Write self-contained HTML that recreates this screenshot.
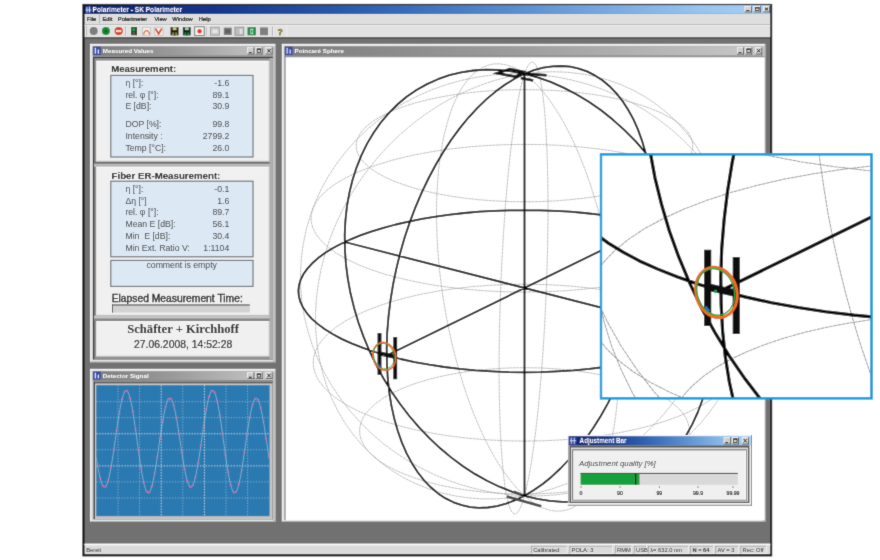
<!DOCTYPE html>
<html><head><meta charset="utf-8"><title>Polarimeter</title>
<style>
html,body{margin:0;padding:0;background:#fff;}
body{width:880px;height:560px;overflow:hidden;}
svg{display:block;font-family:"Liberation Sans",sans-serif;}
</style></head><body>
<svg width="880" height="560" viewBox="0 0 880 560">
<filter id="bl" x="0" y="0" width="880" height="560" filterUnits="userSpaceOnUse"><feConvolveMatrix order="3" kernelMatrix="0.02 0.075 0.02 0.075 0.62 0.075 0.02 0.075 0.02" divisor="1" edgeMode="duplicate" preserveAlpha="true"/></filter>
<g filter="url(#bl)"><rect x="-5" y="-5" width="890" height="570" fill="#fff"/>
<defs>
<linearGradient id="gA" x1="0" x2="1" y1="0" y2="0"><stop offset="0" stop-color="#0c2170"/><stop offset="0.2" stop-color="#15378c"/><stop offset="0.45" stop-color="#3468b6"/><stop offset="0.7" stop-color="#6a9cd8"/><stop offset="0.9" stop-color="#98c4f0"/><stop offset="1" stop-color="#a9d0f4"/></linearGradient>
<linearGradient id="gI" x1="0" x2="1" y1="0" y2="0"><stop offset="0" stop-color="#7c7c7c"/><stop offset="0.45" stop-color="#9a9a9a"/><stop offset="1" stop-color="#c8c8c8"/></linearGradient>
<clipPath id="cw"><rect x="285.5" y="57.2" width="478.7" height="462.9"/></clipPath>
<clipPath id="ci"><rect x="601" y="154.3" width="270.5" height="244"/></clipPath>
<clipPath id="cs"><rect x="96.3" y="384.8" width="173.5" height="131.6"/></clipPath>
<g id="sph"><path d="M524.5 495.8 L522.8 501.4 L521.1 506.0 L519.5 509.6 L517.8 512.1 L516.2 513.5 L514.6 513.9 L513.0 513.1 L511.5 511.3 L510.0 508.3 L508.6 504.2 L507.3 499.1 L506.0 492.8 L504.8 485.5 L503.8 477.2 L502.8 467.9 L501.9 457.6 L501.2 446.5 L500.5 434.5 L500.0 421.7 L499.6 408.2 L499.3 394.1 L499.1 379.3 L499.1 364.1 L499.2 348.5 L499.4 332.5 L499.8 316.3 L500.3 299.9 L500.9 283.4 L501.6 267.0 L502.5 250.7 L503.4 234.6 L504.5 218.8 L505.6 203.4 L506.9 188.4 L508.2 174.0 L509.6 160.2 L511.1 147.1 L512.7 134.7 L514.3 123.2 L515.9 112.5 L517.6 102.7 L519.3 94.0 L521.0 86.2 L522.8 79.5 L524.5 73.8 L526.2 69.3 L527.9 65.8 L529.6 63.5 L531.3 62.2 L532.9 62.1 L534.4 63.1 L535.9 65.1 L537.3 68.2 L538.7 72.4 L540.0 77.6 L541.2 83.7 L542.3 90.8 L543.3 98.8 L544.3 107.7 L545.1 117.3 L545.8 127.8 L546.4 138.9 L547.0 150.7 L547.4 163.2 L547.7 176.1 L547.9 189.6 L548.0 203.5 L548.0 217.7 L547.8 232.3 L547.6 247.0 L547.2 262.0 L546.8 277.1 L546.2 292.2 L545.5 307.3 L544.8 322.3 L543.9 337.2 L543.0 351.9 L541.9 366.2 L540.8 380.3 L539.6 393.9 L538.4 407.1 L537.0 419.8 L535.6 431.9 L534.1 443.3 L532.6 454.1 L531.1 464.1 L529.5 473.3 L527.8 481.7 L526.2 489.2Z M524.5 495.8 L509.1 494.7 L493.7 492.6 L478.5 489.5 L463.5 485.5 L448.8 480.6 L434.4 474.7 L420.5 467.9 L407.1 460.2 L394.2 451.7 L381.9 442.4 L370.4 432.4 L359.5 421.6 L349.4 410.2 L340.2 398.2 L331.8 385.7 L324.4 372.6 L317.9 359.2 L312.4 345.3 L307.9 331.2 L304.4 316.8 L302.0 302.3 L300.7 287.6 L300.5 272.9 L301.3 258.3 L303.3 243.8 L306.3 229.4 L310.4 215.4 L315.5 201.6 L321.7 188.2 L328.9 175.3 L337.1 163.0 L346.2 151.2 L356.2 140.0 L367.0 129.6 L378.6 119.9 L391.0 111.0 L404.0 103.0 L417.7 95.9 L431.9 89.7 L446.6 84.5 L461.7 80.3 L477.1 77.1 L492.7 75.0 L508.6 73.9 L524.5 73.8 L540.4 74.9 L556.3 76.9 L572.0 80.1 L587.5 84.2 L602.6 89.4 L617.4 95.5 L631.7 102.6 L645.5 110.6 L658.6 119.5 L671.1 129.2 L682.9 139.7 L693.8 150.9 L703.9 162.7 L713.1 175.2 L721.4 188.2 L728.7 201.7 L734.9 215.5 L740.2 229.7 L744.3 244.2 L747.4 258.8 L749.3 273.6 L750.2 288.4 L750.0 303.2 L748.6 317.8 L746.2 332.3 L742.7 346.6 L738.1 360.5 L732.6 374.0 L726.0 387.1 L718.4 399.7 L709.9 411.7 L700.6 423.1 L690.4 433.8 L679.4 443.8 L667.7 453.0 L655.4 461.5 L642.4 469.0 L628.9 475.7 L614.9 481.5 L600.4 486.3 L585.7 490.2 L570.6 493.0 L555.4 494.9 L540.0 495.9Z M524.5 495.8 L530.8 500.9 L537.1 505.0 L543.3 508.1 L549.5 510.1 L555.6 511.1 L561.6 511.0 L567.5 509.8 L573.1 507.5 L578.6 504.1 L583.8 499.6 L588.7 494.1 L593.4 487.5 L597.7 479.9 L601.7 471.3 L605.4 461.7 L608.6 451.2 L611.4 439.9 L613.9 427.8 L615.8 414.9 L617.3 401.3 L618.4 387.1 L619.0 372.4 L619.1 357.2 L618.7 341.6 L617.8 325.8 L616.5 309.7 L614.7 293.5 L612.5 277.3 L609.8 261.1 L606.6 245.0 L603.1 229.2 L599.2 213.7 L594.8 198.6 L590.2 184.0 L585.2 169.9 L579.9 156.5 L574.4 143.8 L568.6 131.8 L562.7 120.7 L556.5 110.4 L550.3 101.1 L543.9 92.7 L537.4 85.4 L531.0 79.1 L524.5 73.8 L518.1 69.7 L511.7 66.6 L505.4 64.7 L499.3 63.8 L493.3 64.0 L487.4 65.4 L481.9 67.8 L476.5 71.2 L471.4 75.7 L466.6 81.2 L462.1 87.7 L457.9 95.0 L454.0 103.3 L450.5 112.4 L447.4 122.3 L444.6 133.0 L442.3 144.3 L440.3 156.3 L438.7 168.8 L437.6 181.9 L436.8 195.5 L436.5 209.4 L436.6 223.7 L437.1 238.2 L438.0 253.0 L439.3 267.9 L441.0 282.9 L443.2 297.9 L445.6 312.9 L448.5 327.8 L451.7 342.4 L455.3 356.9 L459.2 371.0 L463.4 384.8 L467.9 398.1 L472.6 411.0 L477.7 423.3 L483.0 435.0 L488.4 446.0 L494.1 456.4 L500.0 466.0 L506.0 474.7 L512.1 482.7 L518.3 489.7Z M524.5 495.8 L510.4 497.8 L496.2 498.9 L482.2 498.9 L468.4 497.9 L454.8 495.9 L441.5 492.9 L428.5 488.8 L416.0 483.8 L404.0 477.9 L392.5 471.0 L381.6 463.1 L371.4 454.4 L361.9 444.9 L353.2 434.5 L345.3 423.4 L338.2 411.6 L332.1 399.2 L326.8 386.2 L322.6 372.6 L319.3 358.6 L317.0 344.3 L315.7 329.6 L315.5 314.6 L316.3 299.5 L318.2 284.4 L321.1 269.2 L325.0 254.1 L329.8 239.1 L335.7 224.4 L342.5 209.9 L350.2 195.9 L358.8 182.3 L368.2 169.2 L378.4 156.7 L389.4 144.9 L401.0 133.7 L413.2 123.4 L425.9 113.9 L439.1 105.2 L452.8 97.5 L466.7 90.8 L481.0 85.0 L495.4 80.2 L509.9 76.5 L524.5 73.8 L539.0 72.2 L553.5 71.7 L567.7 72.3 L581.7 73.9 L595.4 76.5 L608.7 80.2 L621.6 84.9 L633.9 90.5 L645.7 97.1 L656.8 104.7 L667.2 113.0 L677.0 122.3 L685.9 132.2 L694.1 143.0 L701.4 154.3 L707.8 166.3 L713.3 178.9 L717.9 191.9 L721.6 205.4 L724.3 219.2 L726.0 233.4 L726.8 247.7 L726.5 262.2 L725.4 276.9 L723.2 291.5 L720.2 306.1 L716.1 320.6 L711.2 334.9 L705.4 349.0 L698.8 362.8 L691.3 376.2 L683.0 389.1 L673.9 401.6 L664.2 413.6 L653.8 425.0 L642.8 435.7 L631.1 445.7 L619.0 455.0 L606.4 463.4 L593.4 471.1 L580.1 477.9 L566.5 483.8 L552.6 488.7 L538.6 492.7Z M524.5 292.1 L543.8 291.8 L563.0 290.9 L581.8 289.4 L600.1 287.3 L617.8 284.7 L634.8 281.5 L650.7 277.8 L665.7 273.7 L679.5 269.1 L692.0 264.1 L703.1 258.7 L712.8 253.1 L721.0 247.2 L727.6 241.0 L732.6 234.8 L736.0 228.4 L737.8 221.9 L737.9 215.5 L736.4 209.1 L733.3 202.8 L728.7 196.6 L722.5 190.6 L714.9 184.8 L705.9 179.3 L695.7 174.1 L684.2 169.2 L671.5 164.7 L657.9 160.5 L643.3 156.8 L627.9 153.6 L611.7 150.8 L595.0 148.5 L577.8 146.7 L560.2 145.4 L542.4 144.6 L524.5 144.4 L506.6 144.6 L488.8 145.4 L471.2 146.7 L454.0 148.5 L437.3 150.8 L421.1 153.6 L405.7 156.8 L391.1 160.5 L377.5 164.7 L364.8 169.2 L353.3 174.1 L343.1 179.3 L334.1 184.8 L326.5 190.6 L320.3 196.6 L315.7 202.8 L312.6 209.1 L311.1 215.5 L311.2 221.9 L313.0 228.4 L316.4 234.8 L321.4 241.0 L328.0 247.2 L336.2 253.1 L345.9 258.7 L357.0 264.1 L369.5 269.1 L383.3 273.7 L398.3 277.8 L414.2 281.5 L431.2 284.7 L448.9 287.3 L467.2 289.4 L486.0 290.9 L505.2 291.8Z M524.5 201.8 L539.6 201.6 L554.6 200.9 L569.3 199.8 L583.7 198.2 L597.6 196.3 L610.8 193.9 L623.4 191.1 L635.2 188.0 L646.0 184.5 L655.9 180.8 L664.7 176.8 L672.4 172.5 L678.9 168.0 L684.2 163.4 L688.3 158.7 L691.1 153.8 L692.6 148.9 L692.8 144.0 L691.7 139.2 L689.4 134.3 L685.8 129.6 L681.1 125.0 L675.1 120.6 L668.1 116.4 L660.1 112.4 L651.0 108.7 L641.1 105.2 L630.3 102.0 L618.8 99.2 L606.6 96.7 L593.8 94.5 L580.5 92.8 L566.9 91.4 L552.9 90.4 L538.8 89.8 L524.5 89.6 L510.2 89.8 L496.1 90.4 L482.1 91.4 L468.5 92.8 L455.2 94.5 L442.4 96.7 L430.2 99.2 L418.7 102.0 L407.9 105.2 L398.0 108.7 L388.9 112.4 L380.9 116.4 L373.9 120.6 L367.9 125.0 L363.2 129.6 L359.6 134.3 L357.3 139.2 L356.2 144.0 L356.4 148.9 L357.9 153.8 L360.7 158.7 L364.8 163.4 L370.1 168.0 L376.6 172.5 L384.3 176.8 L393.1 180.8 L403.0 184.5 L413.8 188.0 L425.6 191.1 L438.2 193.9 L451.4 196.3 L465.3 198.2 L479.7 199.8 L494.4 200.9 L509.4 201.6Z M524.5 441.1 L543.6 440.8 L562.6 439.8 L581.2 438.2 L599.3 436.0 L616.8 433.2 L633.6 429.8 L649.4 425.9 L664.2 421.5 L677.8 416.6 L690.2 411.3 L701.2 405.7 L710.8 399.7 L718.9 393.4 L725.5 386.9 L730.5 380.2 L733.8 373.5 L735.6 366.6 L735.7 359.8 L734.2 353.0 L731.2 346.2 L726.6 339.7 L720.5 333.3 L713.0 327.2 L704.1 321.3 L693.9 315.8 L682.5 310.6 L670.0 305.8 L656.5 301.4 L642.1 297.5 L626.8 294.0 L610.9 291.1 L594.3 288.6 L577.3 286.7 L559.9 285.3 L542.3 284.5 L524.5 284.2 L506.7 284.5 L489.1 285.3 L471.7 286.7 L454.7 288.6 L438.1 291.1 L422.2 294.0 L406.9 297.5 L392.5 301.4 L379.0 305.8 L366.5 310.6 L355.1 315.8 L344.9 321.3 L336.0 327.2 L328.5 333.3 L322.4 339.7 L317.8 346.2 L314.8 353.0 L313.3 359.8 L313.4 366.6 L315.2 373.5 L318.5 380.2 L323.5 386.9 L330.1 393.4 L338.2 399.7 L347.8 405.7 L358.8 411.3 L371.2 416.6 L384.8 421.5 L399.6 425.9 L415.4 429.8 L432.2 433.2 L449.7 436.0 L467.8 438.2 L486.4 439.8 L505.4 440.8Z M524.5 494.1 L539.3 493.8 L554.0 493.0 L568.4 491.8 L582.5 490.0 L596.0 487.8 L609.0 485.1 L621.4 482.0 L632.9 478.5 L643.5 474.6 L653.2 470.4 L661.8 465.9 L669.4 461.1 L675.8 456.1 L681.0 450.9 L685.0 445.5 L687.7 440.1 L689.2 434.6 L689.4 429.0 L688.3 423.6 L686.1 418.1 L682.6 412.8 L677.9 407.7 L672.1 402.7 L665.3 397.9 L657.4 393.4 L648.5 389.2 L638.8 385.3 L628.2 381.7 L616.9 378.5 L604.9 375.7 L592.4 373.3 L579.4 371.3 L566.0 369.7 L552.3 368.6 L538.5 367.9 L524.5 367.7 L510.5 367.9 L496.7 368.6 L483.0 369.7 L469.6 371.3 L456.6 373.3 L444.1 375.7 L432.1 378.5 L420.8 381.7 L410.2 385.3 L400.5 389.2 L391.6 393.4 L383.7 397.9 L376.9 402.7 L371.1 407.7 L366.4 412.8 L362.9 418.1 L360.7 423.6 L359.6 429.0 L359.8 434.6 L361.3 440.1 L364.0 445.5 L368.0 450.9 L373.2 456.1 L379.6 461.1 L387.2 465.9 L395.8 470.4 L405.5 474.6 L416.1 478.5 L427.6 482.0 L440.0 485.1 L453.0 487.8 L466.5 490.0 L480.6 491.8 L495.0 493.0 L509.7 493.8Z" fill="none" stroke="#9a9a9a" stroke-width="0.65" stroke-dasharray="3 0.5"/><path d="M524.5 372.3 L540.9 372.1 L557.2 371.4 L573.4 370.4 L589.2 368.9 L604.7 367.0 L619.8 364.7 L634.4 362.1 L648.4 359.0 L661.7 355.7 L674.2 352.0 L686.0 347.9 L696.9 343.6 L707.0 339.1 L716.0 334.3 L724.1 329.3 L731.1 324.1 L737.1 318.8 L742.0 313.3 L745.8 307.8 L748.5 302.2 L750.1 296.5 L750.6 290.8 L750.0 285.2 L748.3 279.6 L745.5 274.0 L741.6 268.6 L736.8 263.3 L730.9 258.1 L724.1 253.1 L716.4 248.3 L707.8 243.7 L698.3 239.3 L688.1 235.2 L677.1 231.4 L665.5 227.8 L653.2 224.5 L640.3 221.6 L627.0 218.9 L613.2 216.6 L599.0 214.6 L584.5 213.0 L569.7 211.7 L554.8 210.8 L539.7 210.3 L524.5 210.1 L509.3 210.3 L494.2 210.8 L479.3 211.7 L464.5 213.0 L450.0 214.6 L435.8 216.6 L422.0 218.9 L408.7 221.6 L395.8 224.5 L383.5 227.8 L371.9 231.4 L360.9 235.2 L350.7 239.3 L341.2 243.7 L332.6 248.3 L324.9 253.1 L318.1 258.1 L312.2 263.3 L307.4 268.6 L303.5 274.0 L300.7 279.6 L299.0 285.2 L298.4 290.8 L298.9 296.5 L300.5 302.2 L303.2 307.8 L307.0 313.3 L311.9 318.8 L317.9 324.1 L324.9 329.3 L333.0 334.3 L342.0 339.1 L352.1 343.6 L363.0 347.9 L374.8 352.0 L387.3 355.7 L400.6 359.0 L414.6 362.1 L429.2 364.7 L444.3 367.0 L459.8 368.9 L475.6 370.4 L491.8 371.4 L508.1 372.1Z M524.5 495.8 L515.3 500.2 L506.1 503.7 L497.0 506.1 L487.9 507.5 L479.0 507.8 L470.3 507.1 L461.8 505.2 L453.5 502.3 L445.6 498.4 L438.0 493.4 L430.8 487.3 L424.0 480.3 L417.7 472.2 L411.9 463.2 L406.6 453.3 L401.9 442.6 L397.8 431.0 L394.3 418.7 L391.4 405.6 L389.2 391.9 L387.7 377.7 L386.9 363.0 L386.7 347.9 L387.2 332.4 L388.5 316.7 L390.4 300.8 L393.0 284.8 L396.3 268.9 L400.2 253.0 L404.7 237.3 L409.9 221.9 L415.6 206.8 L421.9 192.2 L428.7 178.0 L435.9 164.5 L443.6 151.5 L451.6 139.3 L460.0 127.9 L468.7 117.3 L477.7 107.6 L486.8 98.9 L496.2 91.1 L505.6 84.3 L515.0 78.5 L524.5 73.8 L533.9 70.2 L543.3 67.7 L552.5 66.3 L561.5 66.0 L570.3 66.7 L578.8 68.6 L587.0 71.4 L594.9 75.4 L602.4 80.3 L609.5 86.2 L616.2 93.1 L622.3 100.8 L628.0 109.5 L633.2 118.9 L637.8 129.1 L641.8 140.1 L645.3 151.7 L648.2 163.9 L650.5 176.6 L652.2 189.9 L653.3 203.5 L653.8 217.5 L653.7 231.9 L652.9 246.5 L651.6 261.2 L649.6 276.0 L647.1 290.9 L644.0 305.8 L640.3 320.6 L636.1 335.2 L631.4 349.6 L626.1 363.8 L620.4 377.6 L614.2 390.9 L607.6 403.9 L600.6 416.3 L593.2 428.1 L585.4 439.3 L577.4 449.8 L569.0 459.5 L560.4 468.5 L551.7 476.7 L542.7 484.0 L533.6 490.3Z M524.5 495.8 L511.9 491.7 L499.4 486.7 L487.0 480.8 L474.8 473.9 L463.0 466.2 L451.4 457.6 L440.2 448.3 L429.4 438.2 L419.1 427.4 L409.3 416.0 L400.1 404.0 L391.4 391.4 L383.4 378.3 L376.1 364.9 L369.5 351.0 L363.6 336.9 L358.4 322.5 L354.1 307.9 L350.5 293.3 L347.8 278.6 L345.9 263.9 L344.9 249.3 L344.7 234.8 L345.4 220.6 L346.9 206.7 L349.3 193.1 L352.5 180.0 L356.6 167.3 L361.5 155.1 L367.1 143.6 L373.6 132.7 L380.8 122.5 L388.8 113.1 L397.4 104.5 L406.6 96.8 L416.5 90.0 L427.0 84.1 L437.9 79.2 L449.4 75.2 L461.2 72.3 L473.4 70.5 L485.9 69.7 L498.6 70.0 L511.5 71.4 L524.5 73.8 L537.5 77.4 L550.6 81.9 L563.5 87.6 L576.3 94.2 L588.8 101.8 L601.1 110.3 L613.0 119.8 L624.5 130.1 L635.5 141.2 L645.9 153.1 L655.8 165.7 L665.0 178.8 L673.5 192.6 L681.3 206.8 L688.3 221.4 L694.4 236.4 L699.7 251.6 L704.2 267.0 L707.7 282.5 L710.3 297.9 L712.0 313.3 L712.7 328.6 L712.5 343.6 L711.4 358.3 L709.3 372.6 L706.3 386.5 L702.5 399.8 L697.7 412.5 L692.1 424.6 L685.8 436.0 L678.6 446.6 L670.7 456.4 L662.1 465.3 L652.9 473.3 L643.1 480.4 L632.7 486.5 L621.9 491.6 L610.6 495.8 L599.0 498.8 L587.0 500.9 L574.8 501.9 L562.4 501.9 L549.8 500.9 L537.2 498.8Z M386.7 355.5 L653.8 224.7 M344.7 242.0 L712.7 336.1 M524.5 73.8 L524.5 495.8" fill="none" stroke="#000" stroke-width="1.80" stroke-linejoin="round"/><g stroke="#0d0d0d" stroke-width="2.5" fill="none" stroke-linejoin="miter"><path d="M497.2 73.2 L509.8 69 L523.6 71.9 L515.6 76.8 Z"/><path d="M525.5 73.8 L546.5 75.3 M520.8 78 L533.2 80.5"/></g><g stroke="#484848" stroke-width="2.6" fill="none"><path d="M506.8 496.5 L541.3 506.2 M513.7 491.8 L520.9 494.4"/></g><g stroke="#0a0a0a" fill="none"><path d="M379.5 333 L379.5 374.8 M395.2 336.9 L395.2 379.2" stroke-width="3.9"/><path d="M380 353.5 L394.6 356.8" stroke-width="4.1"/></g><ellipse cx="384.3" cy="356.4" rx="11.2" ry="14.0" transform="rotate(-16 384.3 356.4)" fill="none" stroke="#ee6c1c" stroke-width="1.7" stroke-dasharray="1.5 0.35" stroke-linecap="round"/><ellipse cx="383.9" cy="356.1" rx="10.2" ry="13.0" transform="rotate(-16 383.9 356.1)" fill="none" stroke="#2ea040" stroke-width="0.75"/><circle cx="383.8" cy="355.9" r="0.95" fill="#18a040"/><path d="M378.2 364.2 L380.4 366.8" stroke="#2a6fd0" stroke-width="1.3"/></g><g id="sph2"><path d="M524.5 495.8 L522.8 501.4 L521.1 506.0 L519.5 509.6 L517.8 512.1 L516.2 513.5 L514.6 513.9 L513.0 513.1 L511.5 511.3 L510.0 508.3 L508.6 504.2 L507.3 499.1 L506.0 492.8 L504.8 485.5 L503.8 477.2 L502.8 467.9 L501.9 457.6 L501.2 446.5 L500.5 434.5 L500.0 421.7 L499.6 408.2 L499.3 394.1 L499.1 379.3 L499.1 364.1 L499.2 348.5 L499.4 332.5 L499.8 316.3 L500.3 299.9 L500.9 283.4 L501.6 267.0 L502.5 250.7 L503.4 234.6 L504.5 218.8 L505.6 203.4 L506.9 188.4 L508.2 174.0 L509.6 160.2 L511.1 147.1 L512.7 134.7 L514.3 123.2 L515.9 112.5 L517.6 102.7 L519.3 94.0 L521.0 86.2 L522.8 79.5 L524.5 73.8 L526.2 69.3 L527.9 65.8 L529.6 63.5 L531.3 62.2 L532.9 62.1 L534.4 63.1 L535.9 65.1 L537.3 68.2 L538.7 72.4 L540.0 77.6 L541.2 83.7 L542.3 90.8 L543.3 98.8 L544.3 107.7 L545.1 117.3 L545.8 127.8 L546.4 138.9 L547.0 150.7 L547.4 163.2 L547.7 176.1 L547.9 189.6 L548.0 203.5 L548.0 217.7 L547.8 232.3 L547.6 247.0 L547.2 262.0 L546.8 277.1 L546.2 292.2 L545.5 307.3 L544.8 322.3 L543.9 337.2 L543.0 351.9 L541.9 366.2 L540.8 380.3 L539.6 393.9 L538.4 407.1 L537.0 419.8 L535.6 431.9 L534.1 443.3 L532.6 454.1 L531.1 464.1 L529.5 473.3 L527.8 481.7 L526.2 489.2Z M524.5 495.8 L509.1 494.7 L493.7 492.6 L478.5 489.5 L463.5 485.5 L448.8 480.6 L434.4 474.7 L420.5 467.9 L407.1 460.2 L394.2 451.7 L381.9 442.4 L370.4 432.4 L359.5 421.6 L349.4 410.2 L340.2 398.2 L331.8 385.7 L324.4 372.6 L317.9 359.2 L312.4 345.3 L307.9 331.2 L304.4 316.8 L302.0 302.3 L300.7 287.6 L300.5 272.9 L301.3 258.3 L303.3 243.8 L306.3 229.4 L310.4 215.4 L315.5 201.6 L321.7 188.2 L328.9 175.3 L337.1 163.0 L346.2 151.2 L356.2 140.0 L367.0 129.6 L378.6 119.9 L391.0 111.0 L404.0 103.0 L417.7 95.9 L431.9 89.7 L446.6 84.5 L461.7 80.3 L477.1 77.1 L492.7 75.0 L508.6 73.9 L524.5 73.8 L540.4 74.9 L556.3 76.9 L572.0 80.1 L587.5 84.2 L602.6 89.4 L617.4 95.5 L631.7 102.6 L645.5 110.6 L658.6 119.5 L671.1 129.2 L682.9 139.7 L693.8 150.9 L703.9 162.7 L713.1 175.2 L721.4 188.2 L728.7 201.7 L734.9 215.5 L740.2 229.7 L744.3 244.2 L747.4 258.8 L749.3 273.6 L750.2 288.4 L750.0 303.2 L748.6 317.8 L746.2 332.3 L742.7 346.6 L738.1 360.5 L732.6 374.0 L726.0 387.1 L718.4 399.7 L709.9 411.7 L700.6 423.1 L690.4 433.8 L679.4 443.8 L667.7 453.0 L655.4 461.5 L642.4 469.0 L628.9 475.7 L614.9 481.5 L600.4 486.3 L585.7 490.2 L570.6 493.0 L555.4 494.9 L540.0 495.9Z M524.5 495.8 L530.8 500.9 L537.1 505.0 L543.3 508.1 L549.5 510.1 L555.6 511.1 L561.6 511.0 L567.5 509.8 L573.1 507.5 L578.6 504.1 L583.8 499.6 L588.7 494.1 L593.4 487.5 L597.7 479.9 L601.7 471.3 L605.4 461.7 L608.6 451.2 L611.4 439.9 L613.9 427.8 L615.8 414.9 L617.3 401.3 L618.4 387.1 L619.0 372.4 L619.1 357.2 L618.7 341.6 L617.8 325.8 L616.5 309.7 L614.7 293.5 L612.5 277.3 L609.8 261.1 L606.6 245.0 L603.1 229.2 L599.2 213.7 L594.8 198.6 L590.2 184.0 L585.2 169.9 L579.9 156.5 L574.4 143.8 L568.6 131.8 L562.7 120.7 L556.5 110.4 L550.3 101.1 L543.9 92.7 L537.4 85.4 L531.0 79.1 L524.5 73.8 L518.1 69.7 L511.7 66.6 L505.4 64.7 L499.3 63.8 L493.3 64.0 L487.4 65.4 L481.9 67.8 L476.5 71.2 L471.4 75.7 L466.6 81.2 L462.1 87.7 L457.9 95.0 L454.0 103.3 L450.5 112.4 L447.4 122.3 L444.6 133.0 L442.3 144.3 L440.3 156.3 L438.7 168.8 L437.6 181.9 L436.8 195.5 L436.5 209.4 L436.6 223.7 L437.1 238.2 L438.0 253.0 L439.3 267.9 L441.0 282.9 L443.2 297.9 L445.6 312.9 L448.5 327.8 L451.7 342.4 L455.3 356.9 L459.2 371.0 L463.4 384.8 L467.9 398.1 L472.6 411.0 L477.7 423.3 L483.0 435.0 L488.4 446.0 L494.1 456.4 L500.0 466.0 L506.0 474.7 L512.1 482.7 L518.3 489.7Z M524.5 495.8 L510.4 497.8 L496.2 498.9 L482.2 498.9 L468.4 497.9 L454.8 495.9 L441.5 492.9 L428.5 488.8 L416.0 483.8 L404.0 477.9 L392.5 471.0 L381.6 463.1 L371.4 454.4 L361.9 444.9 L353.2 434.5 L345.3 423.4 L338.2 411.6 L332.1 399.2 L326.8 386.2 L322.6 372.6 L319.3 358.6 L317.0 344.3 L315.7 329.6 L315.5 314.6 L316.3 299.5 L318.2 284.4 L321.1 269.2 L325.0 254.1 L329.8 239.1 L335.7 224.4 L342.5 209.9 L350.2 195.9 L358.8 182.3 L368.2 169.2 L378.4 156.7 L389.4 144.9 L401.0 133.7 L413.2 123.4 L425.9 113.9 L439.1 105.2 L452.8 97.5 L466.7 90.8 L481.0 85.0 L495.4 80.2 L509.9 76.5 L524.5 73.8 L539.0 72.2 L553.5 71.7 L567.7 72.3 L581.7 73.9 L595.4 76.5 L608.7 80.2 L621.6 84.9 L633.9 90.5 L645.7 97.1 L656.8 104.7 L667.2 113.0 L677.0 122.3 L685.9 132.2 L694.1 143.0 L701.4 154.3 L707.8 166.3 L713.3 178.9 L717.9 191.9 L721.6 205.4 L724.3 219.2 L726.0 233.4 L726.8 247.7 L726.5 262.2 L725.4 276.9 L723.2 291.5 L720.2 306.1 L716.1 320.6 L711.2 334.9 L705.4 349.0 L698.8 362.8 L691.3 376.2 L683.0 389.1 L673.9 401.6 L664.2 413.6 L653.8 425.0 L642.8 435.7 L631.1 445.7 L619.0 455.0 L606.4 463.4 L593.4 471.1 L580.1 477.9 L566.5 483.8 L552.6 488.7 L538.6 492.7Z M524.5 292.1 L543.8 291.8 L563.0 290.9 L581.8 289.4 L600.1 287.3 L617.8 284.7 L634.8 281.5 L650.7 277.8 L665.7 273.7 L679.5 269.1 L692.0 264.1 L703.1 258.7 L712.8 253.1 L721.0 247.2 L727.6 241.0 L732.6 234.8 L736.0 228.4 L737.8 221.9 L737.9 215.5 L736.4 209.1 L733.3 202.8 L728.7 196.6 L722.5 190.6 L714.9 184.8 L705.9 179.3 L695.7 174.1 L684.2 169.2 L671.5 164.7 L657.9 160.5 L643.3 156.8 L627.9 153.6 L611.7 150.8 L595.0 148.5 L577.8 146.7 L560.2 145.4 L542.4 144.6 L524.5 144.4 L506.6 144.6 L488.8 145.4 L471.2 146.7 L454.0 148.5 L437.3 150.8 L421.1 153.6 L405.7 156.8 L391.1 160.5 L377.5 164.7 L364.8 169.2 L353.3 174.1 L343.1 179.3 L334.1 184.8 L326.5 190.6 L320.3 196.6 L315.7 202.8 L312.6 209.1 L311.1 215.5 L311.2 221.9 L313.0 228.4 L316.4 234.8 L321.4 241.0 L328.0 247.2 L336.2 253.1 L345.9 258.7 L357.0 264.1 L369.5 269.1 L383.3 273.7 L398.3 277.8 L414.2 281.5 L431.2 284.7 L448.9 287.3 L467.2 289.4 L486.0 290.9 L505.2 291.8Z M524.5 201.8 L539.6 201.6 L554.6 200.9 L569.3 199.8 L583.7 198.2 L597.6 196.3 L610.8 193.9 L623.4 191.1 L635.2 188.0 L646.0 184.5 L655.9 180.8 L664.7 176.8 L672.4 172.5 L678.9 168.0 L684.2 163.4 L688.3 158.7 L691.1 153.8 L692.6 148.9 L692.8 144.0 L691.7 139.2 L689.4 134.3 L685.8 129.6 L681.1 125.0 L675.1 120.6 L668.1 116.4 L660.1 112.4 L651.0 108.7 L641.1 105.2 L630.3 102.0 L618.8 99.2 L606.6 96.7 L593.8 94.5 L580.5 92.8 L566.9 91.4 L552.9 90.4 L538.8 89.8 L524.5 89.6 L510.2 89.8 L496.1 90.4 L482.1 91.4 L468.5 92.8 L455.2 94.5 L442.4 96.7 L430.2 99.2 L418.7 102.0 L407.9 105.2 L398.0 108.7 L388.9 112.4 L380.9 116.4 L373.9 120.6 L367.9 125.0 L363.2 129.6 L359.6 134.3 L357.3 139.2 L356.2 144.0 L356.4 148.9 L357.9 153.8 L360.7 158.7 L364.8 163.4 L370.1 168.0 L376.6 172.5 L384.3 176.8 L393.1 180.8 L403.0 184.5 L413.8 188.0 L425.6 191.1 L438.2 193.9 L451.4 196.3 L465.3 198.2 L479.7 199.8 L494.4 200.9 L509.4 201.6Z M524.5 441.1 L543.6 440.8 L562.6 439.8 L581.2 438.2 L599.3 436.0 L616.8 433.2 L633.6 429.8 L649.4 425.9 L664.2 421.5 L677.8 416.6 L690.2 411.3 L701.2 405.7 L710.8 399.7 L718.9 393.4 L725.5 386.9 L730.5 380.2 L733.8 373.5 L735.6 366.6 L735.7 359.8 L734.2 353.0 L731.2 346.2 L726.6 339.7 L720.5 333.3 L713.0 327.2 L704.1 321.3 L693.9 315.8 L682.5 310.6 L670.0 305.8 L656.5 301.4 L642.1 297.5 L626.8 294.0 L610.9 291.1 L594.3 288.6 L577.3 286.7 L559.9 285.3 L542.3 284.5 L524.5 284.2 L506.7 284.5 L489.1 285.3 L471.7 286.7 L454.7 288.6 L438.1 291.1 L422.2 294.0 L406.9 297.5 L392.5 301.4 L379.0 305.8 L366.5 310.6 L355.1 315.8 L344.9 321.3 L336.0 327.2 L328.5 333.3 L322.4 339.7 L317.8 346.2 L314.8 353.0 L313.3 359.8 L313.4 366.6 L315.2 373.5 L318.5 380.2 L323.5 386.9 L330.1 393.4 L338.2 399.7 L347.8 405.7 L358.8 411.3 L371.2 416.6 L384.8 421.5 L399.6 425.9 L415.4 429.8 L432.2 433.2 L449.7 436.0 L467.8 438.2 L486.4 439.8 L505.4 440.8Z M524.5 494.1 L539.3 493.8 L554.0 493.0 L568.4 491.8 L582.5 490.0 L596.0 487.8 L609.0 485.1 L621.4 482.0 L632.9 478.5 L643.5 474.6 L653.2 470.4 L661.8 465.9 L669.4 461.1 L675.8 456.1 L681.0 450.9 L685.0 445.5 L687.7 440.1 L689.2 434.6 L689.4 429.0 L688.3 423.6 L686.1 418.1 L682.6 412.8 L677.9 407.7 L672.1 402.7 L665.3 397.9 L657.4 393.4 L648.5 389.2 L638.8 385.3 L628.2 381.7 L616.9 378.5 L604.9 375.7 L592.4 373.3 L579.4 371.3 L566.0 369.7 L552.3 368.6 L538.5 367.9 L524.5 367.7 L510.5 367.9 L496.7 368.6 L483.0 369.7 L469.6 371.3 L456.6 373.3 L444.1 375.7 L432.1 378.5 L420.8 381.7 L410.2 385.3 L400.5 389.2 L391.6 393.4 L383.7 397.9 L376.9 402.7 L371.1 407.7 L366.4 412.8 L362.9 418.1 L360.7 423.6 L359.6 429.0 L359.8 434.6 L361.3 440.1 L364.0 445.5 L368.0 450.9 L373.2 456.1 L379.6 461.1 L387.2 465.9 L395.8 470.4 L405.5 474.6 L416.1 478.5 L427.6 482.0 L440.0 485.1 L453.0 487.8 L466.5 490.0 L480.6 491.8 L495.0 493.0 L509.7 493.8Z" fill="none" stroke="#9a9a9a" stroke-width="0.55" stroke-dasharray="2 0.3"/><path d="M524.5 372.3 L540.9 372.1 L557.2 371.4 L573.4 370.4 L589.2 368.9 L604.7 367.0 L619.8 364.7 L634.4 362.1 L648.4 359.0 L661.7 355.7 L674.2 352.0 L686.0 347.9 L696.9 343.6 L707.0 339.1 L716.0 334.3 L724.1 329.3 L731.1 324.1 L737.1 318.8 L742.0 313.3 L745.8 307.8 L748.5 302.2 L750.1 296.5 L750.6 290.8 L750.0 285.2 L748.3 279.6 L745.5 274.0 L741.6 268.6 L736.8 263.3 L730.9 258.1 L724.1 253.1 L716.4 248.3 L707.8 243.7 L698.3 239.3 L688.1 235.2 L677.1 231.4 L665.5 227.8 L653.2 224.5 L640.3 221.6 L627.0 218.9 L613.2 216.6 L599.0 214.6 L584.5 213.0 L569.7 211.7 L554.8 210.8 L539.7 210.3 L524.5 210.1 L509.3 210.3 L494.2 210.8 L479.3 211.7 L464.5 213.0 L450.0 214.6 L435.8 216.6 L422.0 218.9 L408.7 221.6 L395.8 224.5 L383.5 227.8 L371.9 231.4 L360.9 235.2 L350.7 239.3 L341.2 243.7 L332.6 248.3 L324.9 253.1 L318.1 258.1 L312.2 263.3 L307.4 268.6 L303.5 274.0 L300.7 279.6 L299.0 285.2 L298.4 290.8 L298.9 296.5 L300.5 302.2 L303.2 307.8 L307.0 313.3 L311.9 318.8 L317.9 324.1 L324.9 329.3 L333.0 334.3 L342.0 339.1 L352.1 343.6 L363.0 347.9 L374.8 352.0 L387.3 355.7 L400.6 359.0 L414.6 362.1 L429.2 364.7 L444.3 367.0 L459.8 368.9 L475.6 370.4 L491.8 371.4 L508.1 372.1Z M524.5 495.8 L515.3 500.2 L506.1 503.7 L497.0 506.1 L487.9 507.5 L479.0 507.8 L470.3 507.1 L461.8 505.2 L453.5 502.3 L445.6 498.4 L438.0 493.4 L430.8 487.3 L424.0 480.3 L417.7 472.2 L411.9 463.2 L406.6 453.3 L401.9 442.6 L397.8 431.0 L394.3 418.7 L391.4 405.6 L389.2 391.9 L387.7 377.7 L386.9 363.0 L386.7 347.9 L387.2 332.4 L388.5 316.7 L390.4 300.8 L393.0 284.8 L396.3 268.9 L400.2 253.0 L404.7 237.3 L409.9 221.9 L415.6 206.8 L421.9 192.2 L428.7 178.0 L435.9 164.5 L443.6 151.5 L451.6 139.3 L460.0 127.9 L468.7 117.3 L477.7 107.6 L486.8 98.9 L496.2 91.1 L505.6 84.3 L515.0 78.5 L524.5 73.8 L533.9 70.2 L543.3 67.7 L552.5 66.3 L561.5 66.0 L570.3 66.7 L578.8 68.6 L587.0 71.4 L594.9 75.4 L602.4 80.3 L609.5 86.2 L616.2 93.1 L622.3 100.8 L628.0 109.5 L633.2 118.9 L637.8 129.1 L641.8 140.1 L645.3 151.7 L648.2 163.9 L650.5 176.6 L652.2 189.9 L653.3 203.5 L653.8 217.5 L653.7 231.9 L652.9 246.5 L651.6 261.2 L649.6 276.0 L647.1 290.9 L644.0 305.8 L640.3 320.6 L636.1 335.2 L631.4 349.6 L626.1 363.8 L620.4 377.6 L614.2 390.9 L607.6 403.9 L600.6 416.3 L593.2 428.1 L585.4 439.3 L577.4 449.8 L569.0 459.5 L560.4 468.5 L551.7 476.7 L542.7 484.0 L533.6 490.3Z M524.5 495.8 L511.9 491.7 L499.4 486.7 L487.0 480.8 L474.8 473.9 L463.0 466.2 L451.4 457.6 L440.2 448.3 L429.4 438.2 L419.1 427.4 L409.3 416.0 L400.1 404.0 L391.4 391.4 L383.4 378.3 L376.1 364.9 L369.5 351.0 L363.6 336.9 L358.4 322.5 L354.1 307.9 L350.5 293.3 L347.8 278.6 L345.9 263.9 L344.9 249.3 L344.7 234.8 L345.4 220.6 L346.9 206.7 L349.3 193.1 L352.5 180.0 L356.6 167.3 L361.5 155.1 L367.1 143.6 L373.6 132.7 L380.8 122.5 L388.8 113.1 L397.4 104.5 L406.6 96.8 L416.5 90.0 L427.0 84.1 L437.9 79.2 L449.4 75.2 L461.2 72.3 L473.4 70.5 L485.9 69.7 L498.6 70.0 L511.5 71.4 L524.5 73.8 L537.5 77.4 L550.6 81.9 L563.5 87.6 L576.3 94.2 L588.8 101.8 L601.1 110.3 L613.0 119.8 L624.5 130.1 L635.5 141.2 L645.9 153.1 L655.8 165.7 L665.0 178.8 L673.5 192.6 L681.3 206.8 L688.3 221.4 L694.4 236.4 L699.7 251.6 L704.2 267.0 L707.7 282.5 L710.3 297.9 L712.0 313.3 L712.7 328.6 L712.5 343.6 L711.4 358.3 L709.3 372.6 L706.3 386.5 L702.5 399.8 L697.7 412.5 L692.1 424.6 L685.8 436.0 L678.6 446.6 L670.7 456.4 L662.1 465.3 L652.9 473.3 L643.1 480.4 L632.7 486.5 L621.9 491.6 L610.6 495.8 L599.0 498.8 L587.0 500.9 L574.8 501.9 L562.4 501.9 L549.8 500.9 L537.2 498.8Z M386.7 355.5 L653.8 224.7 M344.7 242.0 L712.7 336.1 M524.5 73.8 L524.5 495.8" fill="none" stroke="#000" stroke-width="1.75" stroke-linejoin="round"/><g stroke="#0d0d0d" stroke-width="2.5" fill="none" stroke-linejoin="miter"><path d="M497.2 73.2 L509.8 69 L523.6 71.9 L515.6 76.8 Z"/><path d="M525.5 73.8 L546.5 75.3 M520.8 78 L533.2 80.5"/></g><g stroke="#484848" stroke-width="2.6" fill="none"><path d="M506.8 496.5 L541.3 506.2 M513.7 491.8 L520.9 494.4"/></g><g stroke="#0a0a0a" fill="none"><path d="M379.5 333 L379.5 374.8 M395.2 336.9 L395.2 379.2" stroke-width="3.9"/><path d="M380 353.5 L394.6 356.8" stroke-width="4.1"/></g><ellipse cx="384.3" cy="356.4" rx="11.2" ry="14.0" transform="rotate(-16 384.3 356.4)" fill="none" stroke="#ee6c1c" stroke-width="1.7" stroke-dasharray="1.5 0.35" stroke-linecap="round"/><ellipse cx="383.9" cy="356.1" rx="10.2" ry="13.0" transform="rotate(-16 383.9 356.1)" fill="none" stroke="#2ea040" stroke-width="0.75"/><circle cx="383.8" cy="355.9" r="0.95" fill="#18a040"/><path d="M378.2 364.2 L380.4 366.8" stroke="#2a6fd0" stroke-width="1.3"/></g>
</defs>
<rect x="82.40" y="3.90" width="689.80" height="552.50" fill="#050505"/>
<rect x="84.50" y="5.10" width="685.80" height="8.80" fill="url(#gA)"/>
<rect x="84.50" y="13.90" width="685.80" height="10.70" fill="#dedede"/>
<rect x="84.50" y="24.60" width="685.80" height="12.90" fill="#e2e2e2"/>
<rect x="84.50" y="24.40" width="685.80" height="0.60" fill="#c8c8c8"/>
<rect x="84.50" y="25.00" width="685.80" height="0.60" fill="#f6f6f6"/>
<rect x="84.50" y="37.50" width="685.80" height="506.10" fill="#717171"/>
<rect x="84.50" y="37.50" width="685.80" height="1.20" fill="#505050"/>
<rect x="84.50" y="543.60" width="685.80" height="10.60" fill="#dadada"/>
<rect x="84.50" y="543.60" width="685.80" height="1.80" fill="#f8f8f8"/>
<rect x="85.40" y="6.40" width="6.20" height="6.40" fill="#2a3f9a"/>
<path d="M87 7 V12.6 M89.4 6.6 V12.6 M85.6 10 H91.4" stroke="#dfe6ff" stroke-width="0.9" fill="none"/>
<text x="92.60" y="11.90" font-size="6.60" fill="#fff" font-weight="bold">Polarimeter - SK Polarimeter</text>
<rect x="744.50" y="6.00" width="7.40" height="6.30" fill="#d6d6d6"/>
<rect x="744.50" y="6.00" width="7.40" height="0.70" fill="#f6f6f6"/>
<rect x="744.50" y="6.00" width="0.70" height="6.30" fill="#f6f6f6"/>
<rect x="744.50" y="11.60" width="7.40" height="0.70" fill="#3c3c3c"/>
<rect x="751.20" y="6.00" width="0.70" height="6.30" fill="#3c3c3c"/>
<rect x="746.10" y="10.00" width="3.20" height="1.00" fill="#111"/>
<rect x="753.60" y="6.00" width="7.40" height="6.30" fill="#d6d6d6"/>
<rect x="753.60" y="6.00" width="7.40" height="0.70" fill="#f6f6f6"/>
<rect x="753.60" y="6.00" width="0.70" height="6.30" fill="#f6f6f6"/>
<rect x="753.60" y="11.60" width="7.40" height="0.70" fill="#3c3c3c"/>
<rect x="760.30" y="6.00" width="0.70" height="6.30" fill="#3c3c3c"/>
<rect x="755.30" y="7.70" width="3.80" height="2.70" fill="none" stroke="#111" stroke-width="0.7"/>
<rect x="755.00" y="7.40" width="4.40" height="1.00" fill="#111"/>
<rect x="763.20" y="6.00" width="6.80" height="6.30" fill="#d6d6d6"/>
<rect x="763.20" y="6.00" width="6.80" height="0.70" fill="#f6f6f6"/>
<rect x="763.20" y="6.00" width="0.70" height="6.30" fill="#f6f6f6"/>
<rect x="763.20" y="11.60" width="6.80" height="0.70" fill="#3c3c3c"/>
<rect x="769.30" y="6.00" width="0.70" height="6.30" fill="#3c3c3c"/>
<path d="M765.00 7.80 L768.00 10.30 M768.00 7.80 L765.00 10.30" stroke="#111" stroke-width="1" fill="none"/>
<text x="86.90" y="21.10" font-size="5.75" fill="#000" stroke="#000" stroke-width="0.18">File</text>
<text x="102.50" y="21.10" font-size="5.75" fill="#000" stroke="#000" stroke-width="0.18">Edit</text>
<text x="117.80" y="21.10" font-size="5.75" fill="#000" stroke="#000" stroke-width="0.18">Polarimeter</text>
<text x="154.40" y="21.10" font-size="5.75" fill="#000" stroke="#000" stroke-width="0.18">View</text>
<text x="172.30" y="21.10" font-size="5.75" fill="#000" stroke="#000" stroke-width="0.18">Window</text>
<text x="198.80" y="21.10" font-size="5.75" fill="#000" stroke="#000" stroke-width="0.18">Help</text>
<rect x="99.30" y="14.60" width="0.60" height="8.80" fill="#9a9a9a"/>
<rect x="85.60" y="25.60" width="0.70" height="11.00" fill="#f8f8f8"/>
<rect x="86.30" y="25.60" width="0.60" height="11.00" fill="#a0a0a0"/>
<circle cx="93.7" cy="31.1" r="4" fill="#7d7d7d"/>
<circle cx="105.9" cy="31.1" r="4" fill="#138a36"/><circle cx="105.9" cy="31.1" r="1.5" fill="#0b6a26"/>
<circle cx="118.7" cy="31.1" r="4.1" fill="#d93a20"/>
<rect x="116.00" y="30.00" width="5.40" height="2.20" fill="#f5d6cf"/>
<rect x="125.60" y="26.60" width="0.60" height="9.20" fill="#8c8c8c"/>
<rect x="126.20" y="26.60" width="0.60" height="9.20" fill="#f8f8f8"/>
<rect x="131.00" y="27.00" width="5.80" height="8.20" fill="#14522a"/>
<rect x="132.30" y="28.20" width="2.90" height="2.80" fill="#2a9a4a"/>
<rect x="133.20" y="32.20" width="1.20" height="2.20" fill="#d64a30"/>
<rect x="136.00" y="27.00" width="1.00" height="8.20" fill="#222"/>
<rect x="142.50" y="27.20" width="8.10" height="8.00" fill="#f3ecea"/>
<path d="M143.6 34.6 C144.6 29.2 148.6 29.2 149.6 34.6" stroke="#d96a50" stroke-width="1.2" fill="none"/>
<rect x="142.5" y="27.2" width="8.1" height="8" fill="none" stroke="#b8b0b0" stroke-width="0.6"/>
<rect x="154.50" y="27.20" width="8.50" height="8.00" fill="#f3ecea"/>
<path d="M155.4 28.6 L158.6 33.8 L161.8 28.6" stroke="#d9482c" stroke-width="1.8" fill="none"/>
<rect x="154.5" y="27.2" width="8.5" height="8" fill="none" stroke="#b8b0b0" stroke-width="0.6"/>
<rect x="170.60" y="27.20" width="7.90" height="8.10" fill="#15150c"/>
<rect x="172.60" y="27.20" width="4.00" height="3.00" fill="#c9c27a"/>
<rect x="172.20" y="32.40" width="4.80" height="2.90" fill="#8e8a40"/>
<rect x="174.00" y="32.40" width="1.20" height="2.90" fill="#15150c"/>
<rect x="182.90" y="27.20" width="7.70" height="8.10" fill="#0c1a10"/>
<rect x="184.90" y="27.20" width="3.90" height="3.00" fill="#9ccaa8"/>
<rect x="184.40" y="32.40" width="4.80" height="2.90" fill="#1f8a46"/>
<rect x="186.20" y="32.40" width="1.20" height="2.90" fill="#0c1a10"/>
<rect x="194.70" y="26.80" width="9.50" height="8.80" fill="#f4f4f4"/>
<rect x="194.7" y="26.8" width="9.5" height="8.8" fill="none" stroke="#6a6a6a" stroke-width="0.9"/>
<circle cx="199.6" cy="31.2" r="2.2" fill="#e8321a"/>
<rect x="206.60" y="26.60" width="0.60" height="9.20" fill="#8c8c8c"/>
<rect x="207.20" y="26.60" width="0.60" height="9.20" fill="#f8f8f8"/>
<rect x="210.50" y="27.20" width="8.90" height="8.10" fill="#c8c8c8"/>
<rect x="210.5" y="27.2" width="8.9" height="8.1" fill="none" stroke="#9a9a9a" stroke-width="0.8"/>
<rect x="212.40" y="29.60" width="5.20" height="3.40" fill="#e6e6e6"/>
<rect x="223.80" y="27.60" width="7.90" height="7.40" fill="#7a7a7a"/>
<rect x="225.20" y="29.40" width="5.20" height="3.80" fill="#5e5e5e"/>
<rect x="234.90" y="27.20" width="8.90" height="8.10" fill="#bdbdbd"/>
<rect x="234.9" y="27.2" width="8.9" height="8.1" fill="none" stroke="#8a8a8a" stroke-width="0.8"/>
<rect x="239.60" y="28.80" width="2.80" height="5.00" fill="#e2e2e2"/>
<rect x="247.50" y="27.20" width="8.40" height="8.10" fill="#1c8c44"/>
<rect x="250.40" y="28.80" width="2.80" height="5.00" fill="#d8eedd"/>
<rect x="251.20" y="29.80" width="1.20" height="3.00" fill="#1c6c38"/>
<rect x="260.00" y="27.40" width="8.00" height="7.80" fill="#7f7f7f"/>
<rect x="272.30" y="26.60" width="0.60" height="9.20" fill="#8c8c8c"/>
<rect x="272.90" y="26.60" width="0.60" height="9.20" fill="#f8f8f8"/>
<text x="280.00" y="34.60" font-size="8.60" fill="#a89400" font-weight="bold" text-anchor="middle" stroke="#5c5200" stroke-width="0.35">?</text>
<rect x="286.60" y="25.40" width="0.70" height="11.40" fill="#f6f6f6"/>
<text x="86.20" y="552.10" font-size="5.75" fill="#333">Bereit</text>
<rect x="531.20" y="545.80" width="36.10" height="0.60" fill="#8e8e8e"/>
<rect x="531.20" y="545.80" width="0.60" height="8.10" fill="#8e8e8e"/>
<rect x="531.20" y="553.30" width="36.10" height="0.60" fill="#fafafa"/>
<rect x="566.70" y="545.80" width="0.60" height="8.10" fill="#fafafa"/>
<text x="533.20" y="552.10" font-size="5.75" fill="#2c2c2c">Calibrated</text>
<rect x="569.60" y="545.80" width="43.40" height="0.60" fill="#8e8e8e"/>
<rect x="569.60" y="545.80" width="0.60" height="8.10" fill="#8e8e8e"/>
<rect x="569.60" y="553.30" width="43.40" height="0.60" fill="#fafafa"/>
<rect x="612.40" y="545.80" width="0.60" height="8.10" fill="#fafafa"/>
<text x="571.60" y="552.10" font-size="5.75" fill="#2c2c2c">POLA: 3</text>
<rect x="615.00" y="545.80" width="16.80" height="0.60" fill="#8e8e8e"/>
<rect x="615.00" y="545.80" width="0.60" height="8.10" fill="#8e8e8e"/>
<rect x="615.00" y="553.30" width="16.80" height="0.60" fill="#fafafa"/>
<rect x="631.20" y="545.80" width="0.60" height="8.10" fill="#fafafa"/>
<text x="617.00" y="552.10" font-size="5.75" fill="#2c2c2c">RMM</text>
<rect x="634.00" y="545.80" width="12.60" height="0.60" fill="#8e8e8e"/>
<rect x="634.00" y="545.80" width="0.60" height="8.10" fill="#8e8e8e"/>
<rect x="634.00" y="553.30" width="12.60" height="0.60" fill="#fafafa"/>
<rect x="646.00" y="545.80" width="0.60" height="8.10" fill="#fafafa"/>
<text x="636.00" y="552.10" font-size="5.75" fill="#2c2c2c">USB</text>
<rect x="648.20" y="545.80" width="40.20" height="0.60" fill="#8e8e8e"/>
<rect x="648.20" y="545.80" width="0.60" height="8.10" fill="#8e8e8e"/>
<rect x="648.20" y="553.30" width="40.20" height="0.60" fill="#fafafa"/>
<rect x="687.80" y="545.80" width="0.60" height="8.10" fill="#fafafa"/>
<text x="650.20" y="552.10" font-size="5.75" fill="#2c2c2c">λ= 632.0 nm</text>
<rect x="690.40" y="545.80" width="23.10" height="0.60" fill="#8e8e8e"/>
<rect x="690.40" y="545.80" width="0.60" height="8.10" fill="#8e8e8e"/>
<rect x="690.40" y="553.30" width="23.10" height="0.60" fill="#fafafa"/>
<rect x="712.90" y="545.80" width="0.60" height="8.10" fill="#fafafa"/>
<text x="692.40" y="552.10" font-size="5.75" fill="#2c2c2c" font-weight="bold">N = 64</text>
<rect x="715.50" y="545.80" width="23.10" height="0.60" fill="#8e8e8e"/>
<rect x="715.50" y="545.80" width="0.60" height="8.10" fill="#8e8e8e"/>
<rect x="715.50" y="553.30" width="23.10" height="0.60" fill="#fafafa"/>
<rect x="738.00" y="545.80" width="0.60" height="8.10" fill="#fafafa"/>
<text x="717.50" y="552.10" font-size="5.75" fill="#2c2c2c">AV = 3</text>
<rect x="740.60" y="545.80" width="26.20" height="0.60" fill="#8e8e8e"/>
<rect x="740.60" y="545.80" width="0.60" height="8.10" fill="#8e8e8e"/>
<rect x="740.60" y="553.30" width="26.20" height="0.60" fill="#fafafa"/>
<rect x="766.20" y="545.80" width="0.60" height="8.10" fill="#fafafa"/>
<text x="742.60" y="552.10" font-size="5.75" fill="#2c2c2c">Rec: Off</text>
<rect x="90.10" y="43.90" width="185.60" height="318.40" fill="#e4e4e4"/>
<rect x="90.10" y="43.90" width="185.60" height="0.70" fill="#f6f6f6"/>
<rect x="90.10" y="43.90" width="0.70" height="318.40" fill="#f6f6f6"/>
<rect x="272.80" y="46.40" width="2.90" height="315.20" fill="#c4c4c4"/>
<rect x="90.10" y="361.60" width="185.60" height="0.70" fill="#9a9a9a"/>
<rect x="275.00" y="43.90" width="0.70" height="318.40" fill="#9a9a9a"/>
<rect x="92.70" y="46.40" width="180.40" height="313.40" fill="#8c8c8c"/>
<rect x="92.70" y="46.40" width="180.40" height="9.00" fill="url(#gI)"/>
<rect x="93.10" y="46.60" width="7.60" height="8.40" fill="#3448a8"/>
<path d="M95.30 47.80 v6.00 M98.30 49.40 v4.40" stroke="#e6ecff" stroke-width="1.2" fill="none"/>
<text x="102.80" y="53.20" font-size="6.25" fill="#fff" font-weight="bold">Measured Values</text>
<rect x="265.60" y="47.30" width="6.90" height="7.10" fill="#cfcfcf"/>
<rect x="265.60" y="47.30" width="6.90" height="0.70" fill="#f6f6f6"/>
<rect x="265.60" y="47.30" width="0.70" height="7.10" fill="#f6f6f6"/>
<rect x="265.60" y="53.70" width="6.90" height="0.70" fill="#3c3c3c"/>
<rect x="271.80" y="47.30" width="0.70" height="7.10" fill="#3c3c3c"/>
<path d="M267.40 49.10 L270.50 52.40 M270.50 49.10 L267.40 52.40" stroke="#111" stroke-width="1" fill="none"/>
<rect x="255.50" y="47.30" width="7.00" height="7.10" fill="#cfcfcf"/>
<rect x="255.50" y="47.30" width="7.00" height="0.70" fill="#f6f6f6"/>
<rect x="255.50" y="47.30" width="0.70" height="7.10" fill="#f6f6f6"/>
<rect x="255.50" y="53.70" width="7.00" height="0.70" fill="#3c3c3c"/>
<rect x="261.80" y="47.30" width="0.70" height="7.10" fill="#3c3c3c"/>
<rect x="257.20" y="49.00" width="3.40" height="3.50" fill="none" stroke="#111" stroke-width="0.7"/>
<rect x="256.90" y="48.70" width="4.00" height="1.00" fill="#111"/>
<rect x="247.30" y="47.30" width="7.00" height="7.10" fill="#cfcfcf"/>
<rect x="247.30" y="47.30" width="7.00" height="0.70" fill="#f6f6f6"/>
<rect x="247.30" y="47.30" width="0.70" height="7.10" fill="#f6f6f6"/>
<rect x="247.30" y="53.70" width="7.00" height="0.70" fill="#3c3c3c"/>
<rect x="253.60" y="47.30" width="0.70" height="7.10" fill="#3c3c3c"/>
<rect x="248.90" y="52.10" width="2.80" height="1.00" fill="#111"/>
<rect x="93.10" y="57.20" width="179.70" height="302.00" fill="#909090"/>
<rect x="93.10" y="57.10" width="179.70" height="1.00" fill="#2a2a2a"/>
<rect x="93.00" y="57.10" width="1.20" height="302.10" fill="#222"/>
<rect x="94.00" y="161.60" width="178.80" height="2.10" fill="#6a6a6a"/>
<rect x="94.00" y="163.70" width="178.80" height="3.10" fill="#b8b8b8"/>
<rect x="94.00" y="315.70" width="178.80" height="3.00" fill="#c4c4c4"/>
<rect x="94.00" y="318.70" width="178.80" height="2.60" fill="#868686"/>
<rect x="269.60" y="58.00" width="3.30" height="301.20" fill="#adadad"/>
<rect x="96.50" y="60.80" width="173.10" height="100.80" fill="#f0f0f0"/>
<rect x="96.50" y="60.80" width="173.10" height="0.80" fill="#ffffff"/>
<rect x="96.50" y="60.80" width="0.80" height="100.80" fill="#ffffff"/>
<rect x="96.50" y="160.80" width="173.10" height="0.80" fill="#b4b4b4"/>
<rect x="268.80" y="60.80" width="0.80" height="100.80" fill="#b4b4b4"/>
<rect x="96.50" y="166.80" width="173.10" height="148.90" fill="#f0f0f0"/>
<rect x="96.50" y="166.80" width="173.10" height="0.80" fill="#ffffff"/>
<rect x="96.50" y="166.80" width="0.80" height="148.90" fill="#ffffff"/>
<rect x="96.50" y="314.90" width="173.10" height="0.80" fill="#b4b4b4"/>
<rect x="268.80" y="166.80" width="0.80" height="148.90" fill="#b4b4b4"/>
<rect x="96.50" y="321.30" width="173.10" height="35.30" fill="#f0f0f0"/>
<rect x="96.50" y="321.30" width="173.10" height="0.80" fill="#ffffff"/>
<rect x="96.50" y="321.30" width="0.80" height="35.30" fill="#ffffff"/>
<rect x="96.50" y="355.80" width="173.10" height="0.80" fill="#b4b4b4"/>
<rect x="268.80" y="321.30" width="0.80" height="35.30" fill="#b4b4b4"/>
<text x="111.20" y="72.10" font-size="9.60" fill="#000" font-weight="bold">Measurement:</text>
<rect x="110.80" y="75.40" width="142.20" height="81.60" fill="#dce8f4" stroke="#666c74" stroke-width="1.1"/>
<text x="125.40" y="85.80" font-size="8.70" fill="#3c3c3c">η [°]:</text>
<text x="229.30" y="85.80" font-size="8.70" fill="#3c3c3c" text-anchor="end">-1.6</text>
<text x="125.40" y="97.80" font-size="8.70" fill="#3c3c3c">rel. φ [°]:</text>
<text x="229.30" y="97.80" font-size="8.70" fill="#3c3c3c" text-anchor="end">89.1</text>
<text x="125.40" y="109.10" font-size="8.70" fill="#3c3c3c">E [dB]:</text>
<text x="229.30" y="109.10" font-size="8.70" fill="#3c3c3c" text-anchor="end">30.9</text>
<text x="125.40" y="126.70" font-size="8.70" fill="#3c3c3c">DOP [%]:</text>
<text x="229.30" y="126.70" font-size="8.70" fill="#3c3c3c" text-anchor="end">99.8</text>
<text x="125.40" y="138.70" font-size="8.70" fill="#3c3c3c">Intensity :</text>
<text x="229.30" y="138.70" font-size="8.70" fill="#3c3c3c" text-anchor="end">2799.2</text>
<text x="125.40" y="150.80" font-size="8.70" fill="#3c3c3c">Temp [°C]:</text>
<text x="229.30" y="150.80" font-size="8.70" fill="#3c3c3c" text-anchor="end">26.0</text>
<text x="111.60" y="178.60" font-size="9.70" fill="#000" font-weight="bold">Fiber ER-Measurement:</text>
<rect x="110.80" y="181.20" width="142.20" height="75.60" fill="#dce8f4" stroke="#666c74" stroke-width="1.1"/>
<text x="125.40" y="191.70" font-size="8.70" fill="#3c3c3c" xml:space="preserve">η [°]:</text>
<text x="229.30" y="191.70" font-size="8.70" fill="#3c3c3c" text-anchor="end">-0.1</text>
<text x="125.40" y="203.50" font-size="8.70" fill="#3c3c3c" xml:space="preserve">Δη [°]</text>
<text x="229.30" y="203.50" font-size="8.70" fill="#3c3c3c" text-anchor="end">1.6</text>
<text x="125.40" y="215.00" font-size="8.70" fill="#3c3c3c" xml:space="preserve">rel. φ [°]:</text>
<text x="229.30" y="215.00" font-size="8.70" fill="#3c3c3c" text-anchor="end">89.7</text>
<text x="125.40" y="226.80" font-size="8.70" fill="#3c3c3c" xml:space="preserve">Mean E [dB]:</text>
<text x="229.30" y="226.80" font-size="8.70" fill="#3c3c3c" text-anchor="end">56.1</text>
<text x="125.40" y="238.80" font-size="8.70" fill="#3c3c3c" xml:space="preserve">Min  E [dB]:</text>
<text x="229.30" y="238.80" font-size="8.70" fill="#3c3c3c" text-anchor="end">30.4</text>
<text x="125.40" y="250.80" font-size="8.70" fill="#3c3c3c" xml:space="preserve">Min Ext. Ratio V:</text>
<text x="229.30" y="250.80" font-size="8.70" fill="#3c3c3c" text-anchor="end">1:1104</text>
<rect x="110.80" y="260.40" width="142.20" height="26.00" fill="#dce8f4" stroke="#666c74" stroke-width="1.1"/>
<text x="181.70" y="268.40" font-size="8.70" fill="#3c3c3c" text-anchor="middle">comment is empty</text>
<text x="111.70" y="302.40" font-size="10.30" fill="#0c0c0c" stroke="#0c0c0c" stroke-width="0.3">Elapsed Measurement Time:</text>
<rect x="112.00" y="304.50" width="137.80" height="8.10" fill="#d2d2d2"/>
<rect x="112.00" y="304.50" width="137.80" height="1.00" fill="#444"/>
<rect x="112.00" y="304.50" width="1.00" height="8.10" fill="#444"/>
<text x="183.10" y="333.20" font-size="12.60" fill="#1a1a1a" font-weight="bold" text-anchor="middle" font-family="'Liberation Serif',serif">Schäfter + Kirchhoff</text>
<text x="183.10" y="348.00" font-size="10.40" fill="#161616" text-anchor="middle" stroke="#161616" stroke-width="0.2">27.06.2008, 14:52:28</text>
<rect x="281.90" y="43.90" width="483.50" height="478.00" fill="#e4e4e4"/>
<rect x="281.90" y="43.90" width="483.50" height="0.70" fill="#f6f6f6"/>
<rect x="281.90" y="43.90" width="0.70" height="478.00" fill="#f6f6f6"/>
<rect x="762.50" y="46.40" width="2.90" height="474.80" fill="#c4c4c4"/>
<rect x="281.90" y="521.20" width="483.50" height="0.70" fill="#9a9a9a"/>
<rect x="764.70" y="43.90" width="0.70" height="478.00" fill="#9a9a9a"/>
<rect x="284.50" y="46.40" width="478.30" height="473.00" fill="#8c8c8c"/>
<rect x="284.50" y="46.40" width="478.30" height="9.00" fill="url(#gI)"/>
<rect x="284.90" y="46.60" width="7.60" height="8.40" fill="#3448a8"/>
<path d="M287.10 47.80 v6.00 M290.10 49.40 v4.40" stroke="#e6ecff" stroke-width="1.2" fill="none"/>
<text x="294.60" y="53.20" font-size="6.25" fill="#fff" font-weight="bold">Poincaré Sphere</text>
<rect x="755.30" y="47.30" width="6.90" height="7.10" fill="#cfcfcf"/>
<rect x="755.30" y="47.30" width="6.90" height="0.70" fill="#f6f6f6"/>
<rect x="755.30" y="47.30" width="0.70" height="7.10" fill="#f6f6f6"/>
<rect x="755.30" y="53.70" width="6.90" height="0.70" fill="#3c3c3c"/>
<rect x="761.50" y="47.30" width="0.70" height="7.10" fill="#3c3c3c"/>
<path d="M757.10 49.10 L760.20 52.40 M760.20 49.10 L757.10 52.40" stroke="#111" stroke-width="1" fill="none"/>
<rect x="745.20" y="47.30" width="7.00" height="7.10" fill="#cfcfcf"/>
<rect x="745.20" y="47.30" width="7.00" height="0.70" fill="#f6f6f6"/>
<rect x="745.20" y="47.30" width="0.70" height="7.10" fill="#f6f6f6"/>
<rect x="745.20" y="53.70" width="7.00" height="0.70" fill="#3c3c3c"/>
<rect x="751.50" y="47.30" width="0.70" height="7.10" fill="#3c3c3c"/>
<rect x="746.90" y="49.00" width="3.40" height="3.50" fill="none" stroke="#111" stroke-width="0.7"/>
<rect x="746.60" y="48.70" width="4.00" height="1.00" fill="#111"/>
<rect x="737.00" y="47.30" width="7.00" height="7.10" fill="#cfcfcf"/>
<rect x="737.00" y="47.30" width="7.00" height="0.70" fill="#f6f6f6"/>
<rect x="737.00" y="47.30" width="0.70" height="7.10" fill="#f6f6f6"/>
<rect x="737.00" y="53.70" width="7.00" height="0.70" fill="#3c3c3c"/>
<rect x="743.30" y="47.30" width="0.70" height="7.10" fill="#3c3c3c"/>
<rect x="738.60" y="52.10" width="2.80" height="1.00" fill="#111"/>
<rect x="284.60" y="56.40" width="480.00" height="463.70" fill="#ffffff"/>
<rect x="284.60" y="56.40" width="480.00" height="0.80" fill="#6a6a6a"/>
<rect x="284.60" y="56.40" width="0.90" height="463.70" fill="#6a6a6a"/>
<g clip-path="url(#cw)"><use href="#sph"/></g>
<rect x="90.10" y="368.90" width="185.60" height="153.00" fill="#e4e4e4"/>
<rect x="90.10" y="368.90" width="185.60" height="0.70" fill="#f6f6f6"/>
<rect x="90.10" y="368.90" width="0.70" height="153.00" fill="#f6f6f6"/>
<rect x="272.80" y="371.40" width="2.90" height="149.80" fill="#c4c4c4"/>
<rect x="90.10" y="521.20" width="185.60" height="0.70" fill="#9a9a9a"/>
<rect x="275.00" y="368.90" width="0.70" height="153.00" fill="#9a9a9a"/>
<rect x="92.70" y="371.40" width="180.40" height="148.00" fill="#8c8c8c"/>
<rect x="92.70" y="371.40" width="180.40" height="8.60" fill="url(#gI)"/>
<rect x="93.10" y="371.60" width="7.60" height="8.00" fill="#3448a8"/>
<path d="M95.30 372.80 v5.60 M98.30 374.40 v4.00" stroke="#e6ecff" stroke-width="1.2" fill="none"/>
<text x="102.80" y="378.00" font-size="6.25" fill="#fff" font-weight="bold">Detector Signal</text>
<rect x="265.60" y="372.30" width="6.90" height="6.70" fill="#cfcfcf"/>
<rect x="265.60" y="372.30" width="6.90" height="0.70" fill="#f6f6f6"/>
<rect x="265.60" y="372.30" width="0.70" height="6.70" fill="#f6f6f6"/>
<rect x="265.60" y="378.30" width="6.90" height="0.70" fill="#3c3c3c"/>
<rect x="271.80" y="372.30" width="0.70" height="6.70" fill="#3c3c3c"/>
<path d="M267.40 374.10 L270.50 377.00 M270.50 374.10 L267.40 377.00" stroke="#111" stroke-width="1" fill="none"/>
<rect x="255.50" y="372.30" width="7.00" height="6.70" fill="#cfcfcf"/>
<rect x="255.50" y="372.30" width="7.00" height="0.70" fill="#f6f6f6"/>
<rect x="255.50" y="372.30" width="0.70" height="6.70" fill="#f6f6f6"/>
<rect x="255.50" y="378.30" width="7.00" height="0.70" fill="#3c3c3c"/>
<rect x="261.80" y="372.30" width="0.70" height="6.70" fill="#3c3c3c"/>
<rect x="257.20" y="374.00" width="3.40" height="3.10" fill="none" stroke="#111" stroke-width="0.7"/>
<rect x="256.90" y="373.70" width="4.00" height="1.00" fill="#111"/>
<rect x="247.30" y="372.30" width="7.00" height="6.70" fill="#cfcfcf"/>
<rect x="247.30" y="372.30" width="7.00" height="0.70" fill="#f6f6f6"/>
<rect x="247.30" y="372.30" width="0.70" height="6.70" fill="#f6f6f6"/>
<rect x="247.30" y="378.30" width="7.00" height="0.70" fill="#3c3c3c"/>
<rect x="253.60" y="372.30" width="0.70" height="6.70" fill="#3c3c3c"/>
<rect x="248.90" y="376.70" width="2.80" height="1.00" fill="#111"/>
<rect x="93.10" y="380.00" width="179.70" height="139.20" fill="#8c8c8c"/>
<rect x="94.00" y="382.30" width="178.40" height="136.70" fill="#c4c4c4"/>
<rect x="94.00" y="382.30" width="178.40" height="1.00" fill="#3a3a3a"/>
<rect x="94.00" y="382.30" width="1.00" height="136.70" fill="#3a3a3a"/>
<rect x="96.30" y="385.20" width="173.30" height="131.00" fill="#2a79b1"/>
<path d="M118.0 385.2 V516.2 M96.3 401.7 H269.6 M139.6 385.2 V516.2 M96.3 417.7 H269.6 M182.8 385.2 V516.2 M96.3 449.8 H269.6 M226.0 385.2 V516.2 M96.3 481.9 H269.6 M247.6 385.2 V516.2 M96.3 498.0 H269.6" fill="none" stroke="#d4e4f0" stroke-width="0.75" stroke-dasharray="1.3 1.5" opacity="0.6"/>
<path d="M161.2 385.2 V516.2 M96.3 433.8 H269.6 M204.4 385.2 V516.2 M96.3 465.9 H269.6" fill="none" stroke="#e4eef6" stroke-width="0.85" stroke-dasharray="1.5 1.3" opacity="0.85"/>
<g clip-path="url(#cs)"><path d="M96.3 457.8 L97.3 463.8 L98.3 469.3 L99.3 474.3 L100.3 478.6 L101.3 482.1 L102.3 484.7 L103.3 486.4 L104.3 487.1 L105.3 486.8 L106.3 485.6 L107.3 483.3 L108.3 480.2 L109.3 476.1 L110.3 471.3 L111.3 465.8 L112.3 459.8 L113.3 453.3 L114.3 446.5 L115.3 439.5 L116.3 432.5 L117.3 425.7 L118.3 419.1 L119.3 412.9 L120.3 407.3 L121.3 402.3 L122.3 398.1 L123.3 394.7 L124.3 392.3 L125.3 390.9 L126.3 390.5 L127.3 391.1 L128.3 392.7 L129.3 395.4 L130.3 398.9 L131.3 403.4 L132.3 408.6 L133.3 414.5 L134.3 420.9 L135.3 427.8 L136.3 434.9 L137.3 442.2 L138.3 449.4 L139.3 456.5 L140.3 463.3 L141.3 469.7 L142.3 475.5 L143.3 480.6 L144.3 484.9 L145.3 488.4 L146.3 490.8 L147.3 492.4 L148.3 492.8 L149.3 492.3 L150.3 490.8 L151.3 488.2 L152.3 484.8 L153.3 480.5 L154.3 475.5 L155.3 469.9 L156.3 463.7 L157.3 457.1 L158.3 450.3 L159.3 443.4 L160.3 436.6 L161.3 429.9 L162.3 423.6 L163.3 417.8 L164.3 412.5 L165.3 407.9 L166.3 404.2 L167.3 401.3 L168.3 399.3 L169.3 398.3 L170.3 398.3 L171.3 399.3 L172.3 401.2 L173.3 404.1 L174.3 407.8 L175.3 412.2 L176.3 417.4 L177.3 423.1 L178.3 429.2 L179.3 435.6 L180.3 442.2 L181.3 448.8 L182.3 455.2 L183.3 461.4 L184.3 467.2 L185.3 472.4 L186.3 477.0 L187.3 480.8 L188.3 483.8 L189.3 485.8 L190.3 486.9 L191.3 487.1 L192.3 486.2 L193.3 484.3 L194.3 481.5 L195.3 477.8 L196.3 473.3 L197.3 468.1 L198.3 462.3 L199.3 455.9 L200.3 449.2 L201.3 442.3 L202.3 435.3 L203.3 428.4 L204.3 421.7 L205.3 415.3 L206.3 409.4 L207.3 404.2 L208.3 399.7 L209.3 396.0 L210.3 393.2 L211.3 391.3 L212.3 390.5 L213.3 390.7 L214.3 392.0 L215.3 394.2 L216.3 397.4 L217.3 401.5 L218.3 406.4 L219.3 412.0 L220.3 418.3 L221.3 425.0 L222.3 432.0 L223.3 439.3 L224.3 446.5 L225.3 453.7 L226.3 460.7 L227.3 467.2 L228.3 473.3 L229.3 478.7 L230.3 483.3 L231.3 487.1 L232.3 490.0 L233.3 491.9 L234.3 492.8 L235.3 492.6 L236.3 491.5 L237.3 489.4 L238.3 486.3 L239.3 482.3 L240.3 477.6 L241.3 472.2 L242.3 466.2 L243.3 459.8 L244.3 453.1 L245.3 446.2 L246.3 439.3 L247.3 432.6 L248.3 426.1 L249.3 420.0 L250.3 414.5 L251.3 409.7 L252.3 405.6 L253.3 402.3 L254.3 400.0 L255.3 398.6 L256.3 398.2 L257.3 398.8 L258.3 400.3 L259.3 402.8 L260.3 406.2 L261.3 410.4 L262.3 415.2 L263.3 420.7 L264.3 426.7 L265.3 433.0 L266.3 439.6 L267.3 446.2 L268.3 452.7 L269.3 459.0" fill="none" stroke="#9cc2dc" stroke-width="0.8" opacity="0.9"/>
<g fill="#e8609c"><circle cx="97.5" cy="464.9" r="0.95"/><circle cx="100.2" cy="478.3" r="0.95"/><circle cx="102.9" cy="485.9" r="0.95"/><circle cx="105.7" cy="486.5" r="0.95"/><circle cx="108.4" cy="479.9" r="0.95"/><circle cx="111.1" cy="467.0" r="0.95"/><circle cx="113.8" cy="449.8" r="0.95"/><circle cx="116.5" cy="430.9" r="0.95"/><circle cx="119.3" cy="413.1" r="0.95"/><circle cx="122.0" cy="399.3" r="0.95"/><circle cx="124.7" cy="391.6" r="0.95"/><circle cx="127.4" cy="391.2" r="0.95"/><circle cx="130.1" cy="398.3" r="0.95"/><circle cx="132.9" cy="411.8" r="0.95"/><circle cx="135.6" cy="429.7" r="0.95"/><circle cx="138.3" cy="449.4" r="0.95"/><circle cx="141.0" cy="468.0" r="0.95"/><circle cx="143.7" cy="482.6" r="0.95"/><circle cx="146.5" cy="491.2" r="0.95"/><circle cx="149.2" cy="492.4" r="0.95"/><circle cx="151.9" cy="486.3" r="0.95"/><circle cx="154.6" cy="473.8" r="0.95"/><circle cx="157.3" cy="456.9" r="0.95"/><circle cx="160.1" cy="438.2" r="0.95"/><circle cx="162.8" cy="420.7" r="0.95"/><circle cx="165.5" cy="407.1" r="0.95"/><circle cx="168.2" cy="399.4" r="0.95"/><circle cx="170.9" cy="398.8" r="0.95"/><circle cx="173.7" cy="405.3" r="0.95"/><circle cx="176.4" cy="417.8" r="0.95"/><circle cx="179.1" cy="434.3" r="0.95"/><circle cx="181.8" cy="452.2" r="0.95"/><circle cx="184.5" cy="468.5" r="0.95"/><circle cx="187.3" cy="480.7" r="0.95"/><circle cx="190.0" cy="486.7" r="0.95"/><circle cx="192.7" cy="485.6" r="0.95"/><circle cx="195.4" cy="477.3" r="0.95"/><circle cx="198.1" cy="463.2" r="0.95"/><circle cx="200.9" cy="445.4" r="0.95"/><circle cx="203.6" cy="426.5" r="0.95"/><circle cx="206.3" cy="409.4" r="0.95"/><circle cx="209.0" cy="396.9" r="0.95"/><circle cx="211.7" cy="390.9" r="0.95"/><circle cx="214.5" cy="392.3" r="0.95"/><circle cx="217.2" cy="401.0" r="0.95"/><circle cx="219.9" cy="415.7" r="0.95"/><circle cx="222.6" cy="434.3" r="0.95"/><circle cx="225.3" cy="454.0" r="0.95"/><circle cx="228.1" cy="471.9" r="0.95"/><circle cx="230.8" cy="485.2" r="0.95"/><circle cx="233.5" cy="492.1" r="0.95"/><circle cx="236.2" cy="491.6" r="0.95"/><circle cx="238.9" cy="483.8" r="0.95"/><circle cx="241.7" cy="470.1" r="0.95"/><circle cx="244.4" cy="452.5" r="0.95"/><circle cx="247.1" cy="433.9" r="0.95"/><circle cx="249.8" cy="417.1" r="0.95"/><circle cx="252.5" cy="404.7" r="0.95"/><circle cx="255.3" cy="398.6" r="0.95"/><circle cx="258.0" cy="399.7" r="0.95"/><circle cx="260.7" cy="407.8" r="0.95"/><circle cx="263.4" cy="421.4" r="0.95"/><circle cx="266.1" cy="438.5" r="0.95"/><circle cx="268.9" cy="456.3" r="0.95"/></g></g>
<rect x="567.70" y="435.00" width="184.30" height="70.70" fill="#f0f0f0"/>
<rect x="567.70" y="504.80" width="184.30" height="0.90" fill="#7a7a7a"/>
<rect x="751.10" y="435.00" width="0.90" height="70.70" fill="#7a7a7a"/>
<rect x="568.60" y="436.20" width="182.30" height="9.20" fill="url(#gA)"/>
<rect x="568.60" y="445.40" width="180.80" height="57.60" fill="#555"/>
<rect x="568.60" y="445.40" width="1.40" height="57.60" fill="#9a9a9a"/>
<rect x="571.00" y="447.50" width="177.00" height="54.20" fill="#d8d8d8"/>
<rect x="572.20" y="449.40" width="174.80" height="51.00" fill="#5c5c5c"/>
<rect x="573.10" y="450.30" width="173.10" height="49.20" fill="#f0f0f0"/>
<rect x="573.10" y="498.70" width="173.10" height="0.80" fill="#fff"/>
<rect x="745.40" y="450.30" width="0.80" height="49.20" fill="#fff"/>
<rect x="569.40" y="436.60" width="7.20" height="8.40" fill="#2c3f9c"/>
<path d="M571.2 437.6 v6.4 M574.2 437.6 v6.4 M569.8 440.8 h6.4" stroke="#dfe6ff" stroke-width="0.9" fill="none"/>
<text x="579.60" y="443.10" font-size="6.30" fill="#fff" font-weight="bold">Adjustment Bar</text>
<rect x="741.90" y="437.20" width="7.00" height="7.20" fill="#cfcfcf"/>
<rect x="741.90" y="437.20" width="7.00" height="0.70" fill="#f6f6f6"/>
<rect x="741.90" y="437.20" width="0.70" height="7.20" fill="#f6f6f6"/>
<rect x="741.90" y="443.70" width="7.00" height="0.70" fill="#3c3c3c"/>
<rect x="748.20" y="437.20" width="0.70" height="7.20" fill="#3c3c3c"/>
<path d="M743.70 439.00 L746.90 442.40 M746.90 439.00 L743.70 442.40" stroke="#111" stroke-width="1" fill="none"/>
<rect x="731.90" y="437.20" width="7.00" height="7.20" fill="#cfcfcf"/>
<rect x="731.90" y="437.20" width="7.00" height="0.70" fill="#f6f6f6"/>
<rect x="731.90" y="437.20" width="0.70" height="7.20" fill="#f6f6f6"/>
<rect x="731.90" y="443.70" width="7.00" height="0.70" fill="#3c3c3c"/>
<rect x="738.20" y="437.20" width="0.70" height="7.20" fill="#3c3c3c"/>
<rect x="733.60" y="438.90" width="3.40" height="3.60" fill="none" stroke="#111" stroke-width="0.7"/>
<rect x="733.30" y="438.60" width="4.00" height="1.00" fill="#111"/>
<rect x="723.70" y="437.20" width="7.00" height="7.20" fill="#cfcfcf"/>
<rect x="723.70" y="437.20" width="7.00" height="0.70" fill="#f6f6f6"/>
<rect x="723.70" y="437.20" width="0.70" height="7.20" fill="#f6f6f6"/>
<rect x="723.70" y="443.70" width="7.00" height="0.70" fill="#3c3c3c"/>
<rect x="730.00" y="437.20" width="0.70" height="7.20" fill="#3c3c3c"/>
<rect x="725.30" y="442.10" width="2.80" height="1.00" fill="#111"/>
<text x="579.10" y="465.80" font-size="7.75" fill="#3a3a3a" font-style="italic">Adjustment quality [%]</text>
<rect x="580.40" y="473.20" width="157.40" height="11.60" fill="#d9d9d9"/>
<rect x="580.40" y="472.90" width="157.40" height="1.10" fill="#3a3a3a"/>
<rect x="580.60" y="474.00" width="58.90" height="10.80" fill="#14a03c"/>
<rect x="635.00" y="473.20" width="1.20" height="11.60" fill="#111"/>
<rect x="580.65" y="486.20" width="0.70" height="1.60" fill="#444"/>
<text x="581.00" y="494.60" font-size="5.20" fill="#1c1c1c" text-anchor="middle" stroke="#1c1c1c" stroke-width="0.15">0</text>
<rect x="619.65" y="486.20" width="0.70" height="1.60" fill="#444"/>
<text x="620.00" y="494.60" font-size="5.20" fill="#1c1c1c" text-anchor="middle" stroke="#1c1c1c" stroke-width="0.15">90</text>
<rect x="658.95" y="486.20" width="0.70" height="1.60" fill="#444"/>
<text x="659.30" y="494.60" font-size="5.20" fill="#1c1c1c" text-anchor="middle" stroke="#1c1c1c" stroke-width="0.15">99</text>
<rect x="697.65" y="486.20" width="0.70" height="1.60" fill="#444"/>
<text x="698.00" y="494.60" font-size="5.20" fill="#1c1c1c" text-anchor="middle" stroke="#1c1c1c" stroke-width="0.15">99.9</text>
<rect x="732.65" y="486.20" width="0.70" height="1.60" fill="#444"/>
<text x="733.00" y="494.60" font-size="5.20" fill="#1c1c1c" text-anchor="middle" stroke="#1c1c1c" stroke-width="0.15">99.99</text>
<rect x="601.0" y="154.3" width="270.5" height="244.0" fill="#fff" stroke="#119fe0" stroke-width="2.2"/>
<g clip-path="url(#ci)"><g transform="translate(721.7 291.7) scale(1.82) translate(-387.2 -356)"><use href="#sph2"/></g></g>
<rect x="601.0" y="154.3" width="270.5" height="244.0" fill="none" stroke="#119fe0" stroke-width="2.2"/>
</g>
</svg>
</body></html>
